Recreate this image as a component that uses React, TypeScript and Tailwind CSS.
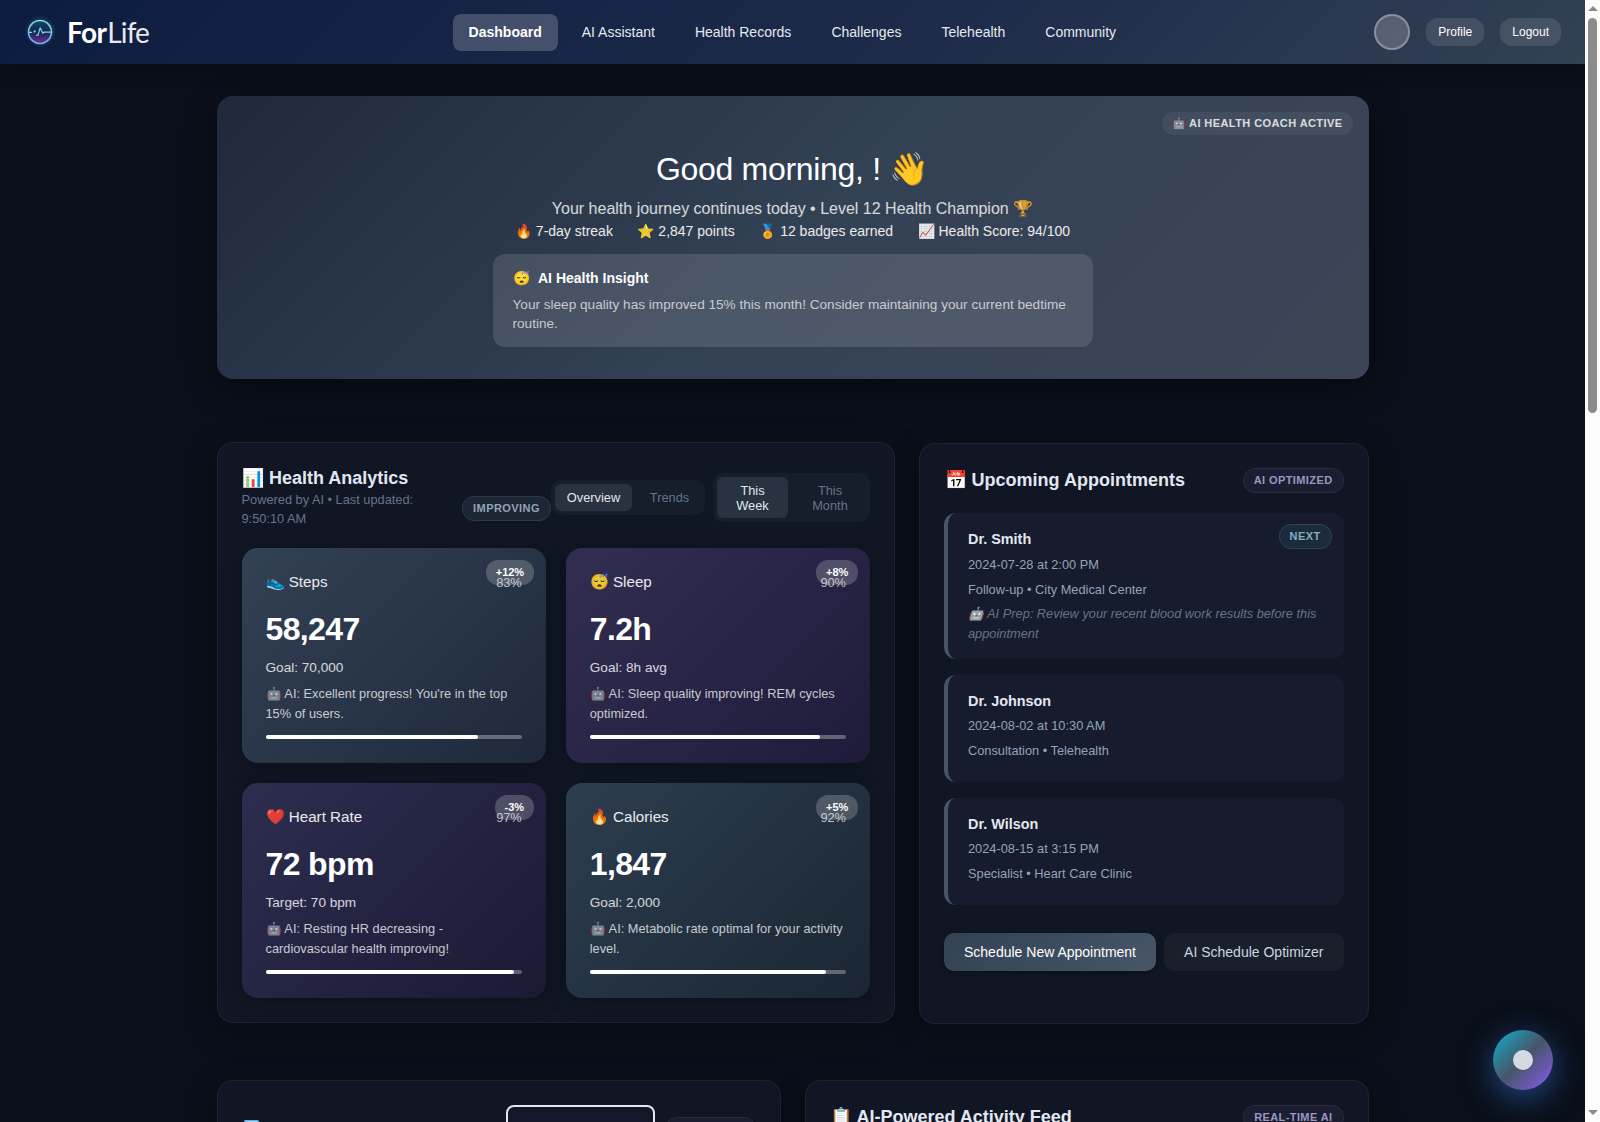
const nav = ["Dashboard", "AI Assistant", "Health Records", "Challenges", "Telehealth", "Community"];

const stats = ["🔥 7-day streak", "⭐ 2,847 points", "🏅 12 badges earned", "📈 Health Score: 94/100"];

const metrics = [
  { title: "👟 Steps", pct: 83, change: "+12%", value: "58,247", goal: "Goal: 70,000", tip: "🤖 AI: Excellent progress! You're in the top 15% of users.", bg: "from-[#334155] to-[#1e293b]" },
  { title: "😴 Sleep", pct: 90, change: "+8%", value: "7.2h", goal: "Goal: 8h avg", tip: "🤖 AI: Sleep quality improving! REM cycles optimized.", bg: "from-[#312e51] to-[#1e1b3a]" },
  { title: "❤️ Heart Rate", pct: 97, change: "-3%", value: "72 bpm", goal: "Target: 70 bpm", tip: "🤖 AI: Resting HR decreasing - cardiovascular health improving!", bg: "from-[#2d2d4f] to-[#1a1a35]" },
  { title: "🔥 Calories", pct: 92, change: "+5%", value: "1,847", goal: "Goal: 2,000", tip: "🤖 AI: Metabolic rate optimal for your activity level.", bg: "from-[#2d3e50] to-[#1a2633]" },
];

const appointments = [
  { name: "Dr. Smith", date: "2024-07-28 at 2:00 PM", place: "Follow-up • City Medical Center", prep: "🤖 AI Prep: Review your recent blood work results before this appointment", height: "h-[145.6px]" },
  { name: "Dr. Johnson", date: "2024-08-02 at 10:30 AM", place: "Consultation • Telehealth", height: "h-[107.2px]" },
  { name: "Dr. Wilson", date: "2024-08-15 at 3:15 PM", place: "Specialist • Heart Care Clinic", height: "h-[106.8px]" },
];

const card = "rounded-2xl border border-white/[0.06] bg-[#101624] p-6 shadow-[0_8px_32px_rgba(0,0,0,0.3)]";
const purpleBadge = "rounded-xl border border-[#2b2b43] bg-[#1b1d30] px-2.5 py-1 text-[11px] leading-[15px] font-semibold tracking-[0.4px] text-[#9a97c0]";

function Logo() {
  return (
    <div className="flex items-center">
      <svg width="32" height="32" viewBox="0 0 32 32" fill="none" className="mr-[11px]">
        <defs>
          <linearGradient id="ring" x1="0" y1="0" x2="0" y2="1">
            <stop offset="0" stopColor="#8fdce8" />
            <stop offset="1" stopColor="#77a5e6" />
          </linearGradient>
          <linearGradient id="fill" x1="0" y1="0" x2="0" y2="1">
            <stop offset="0" stopColor="#0b4a63" />
            <stop offset="0.5" stopColor="#13284f" />
            <stop offset="1" stopColor="#6b2f9c" />
          </linearGradient>
          <linearGradient id="halo" x1="1" y1="0" x2="0" y2="1">
            <stop offset="0" stopColor="#0f3a52" />
            <stop offset="1" stopColor="#14204a" />
          </linearGradient>
        </defs>
        <circle cx="16" cy="15.5" r="15" fill="url(#halo)" opacity="0.8" />
        <circle cx="16" cy="16" r="11.5" fill="url(#fill)" stroke="url(#ring)" strokeWidth="1.6" />
        <path d="M5 16.3h2.8M12.6 19.3l1.4-.2 2.1-7.3 2.7 5.5 1.6-1.2H27" stroke="#8fd0ee" strokeWidth="1.2" strokeLinecap="round" strokeLinejoin="round" />
        <circle cx="10.6" cy="15.4" r="1.1" fill="#8fd0ee" />
      </svg>
      <div className="flex items-baseline font-[Lato,sans-serif] text-[28px] leading-8 text-white">
        <span className="font-bold tracking-[-0.6px]">For</span>
        <span className="ml-px tracking-[-0.9px] text-white/90">Life</span>
      </div>
    </div>
  );
}

function Header() {
  return (
    <header className="relative z-10 flex h-16 shrink-0 items-center justify-between bg-[linear-gradient(135deg,#0c1c40_0%,#1e2b4a_60%,#334155_100%)] px-6 shadow-[0_4px_20px_rgba(0,0,0,0.2)]">
      <Logo />
      <nav className="absolute left-[452.6px] flex gap-2">
        {nav.map((n, i) => (
          <a key={n} className={i === 0 ? "rounded-lg bg-white/20 px-4 py-2 text-sm leading-[21px] font-semibold text-white" : "px-4 py-2 text-sm leading-[21px] text-[#e6e9ef]"}>
            {n}
          </a>
        ))}
      </nav>
      <div className="flex items-center gap-4">
        <div className="size-9 rounded-full border-2 border-white/30 bg-white/20" />
        <button className="h-7 rounded-xl bg-white/10 px-3 text-xs text-white">Profile</button>
        <button className="h-7 rounded-xl bg-white/10 px-3 text-xs text-white">Logout</button>
      </div>
    </header>
  );
}

function Hero() {
  return (
    <section className="relative flex h-[283px] flex-col items-center rounded-2xl bg-[linear-gradient(135deg,#1e293b_0%,#334155_50%,#3c4556_100%)] pt-12 shadow-[0_8px_32px_rgba(0,0,0,0.4)]">
      <span className="absolute top-4 right-4 rounded-xl bg-white/[0.06] px-2.5 py-1 text-[11px] leading-[15px] font-semibold tracking-[0.42px] text-white/80">🤖 AI HEALTH COACH ACTIVE</span>
      <h1 className="text-[32px] leading-[51px] font-light tracking-[-0.32px] text-white">Good morning, ! 👋</h1>
      <p className="mt-px text-base leading-[26px] text-white/80">Your health journey continues today • Level 12 Health Champion 🏆</p>
      <div className="-mt-[2px] flex gap-[24.6px] text-sm leading-[22px] text-white/90">
        {stats.map((s) => <span key={s}>{s}</span>)}
      </div>
      <div className="mt-3 h-[93px] w-[600px] rounded-xl bg-white/[0.12] px-5 pt-3">
        <div className="flex gap-[8.5px] text-sm leading-[24px] text-white">
          <span>😴</span>
          <span className="font-semibold">AI Health Insight</span>
        </div>
        <p className="mt-[5px] text-[13.6px] leading-[19px] text-white/70">Your sleep quality has improved 15% this month! Consider maintaining your current bedtime routine.</p>
      </div>
    </section>
  );
}

function Metric({ m }: { m: (typeof metrics)[number] }) {
  return (
    <div className={`relative h-[215px] rounded-2xl bg-linear-135 p-6 shadow-[0_4px_20px_rgba(0,0,0,0.25)] ${m.bg}`}>
      <span className="absolute top-3 right-3 h-[25px] rounded-xl bg-white/20 px-[9.6px] text-[11px] leading-[25px] font-semibold text-white">{m.change}</span>
      <div className="relative flex h-5 items-center justify-between">
        <span className="text-[15.2px] text-white/90">{m.title}</span>
        <span className="pt-px text-[12.8px] text-white/70">{m.pct}%</span>
      </div>
      <div className="mt-4 text-[32px] leading-[42px] font-bold tracking-[-0.64px] text-white">{m.value}</div>
      <div className="mt-2 text-[13.6px] leading-[20px] text-white/80">{m.goal}</div>
      <p className="mt-[6px] text-[12.8px] leading-[20px] text-white/75">{m.tip}</p>
      <div className="mt-[11px] h-1 rounded-full bg-white/30">
        <div className="h-1 rounded-full bg-white" style={{ width: `${m.pct}%` }} />
      </div>
    </div>
  );
}

function Analytics() {
  return (
    <section className={`${card} mb-px h-[581px] w-[678.5px] -translate-y-px`}>
      <div className="flex h-[81px] items-start">
        <div className="w-[220.5px] pr-7">
          <h2 className="pl-[0.4px] text-lg leading-[23px] font-semibold text-[#e2e8f0]">📊 Health Analytics</h2>
          <p className="text-[12.8px] leading-[19px] text-[#64748b]">Powered by AI • Last updated: 9:50:10 AM</p>
        </div>
        <span className="mt-[29px] h-[25px] w-[89px] rounded-xl border border-[#2e3b4c] bg-[#1c2635] text-center text-[11px] leading-[23px] font-semibold tracking-[0.44px] text-[#94a3b8]">IMPROVING</span>
        <div className="mt-[13px] flex h-[35px] w-[154px] rounded-[10px] bg-[#161d2b] p-1 text-[12.8px]">
          <button className="w-[77px] rounded-md bg-[#283241] text-[#e2e8f0]">Overview</button>
          <button className="ml-1.5 flex-1 text-[#64748b]">Trends</button>
        </div>
        <div className="mt-[6px] ml-2 flex h-[49px] w-[157px] rounded-[10px] bg-[#161d2b] p-1 text-[12.8px] leading-[15px]">
          <button className="w-[71px] rounded-md bg-[#283241] px-4 text-[#e2e8f0]">This Week</button>
          <button className="ml-[6px] flex-1 px-4 text-[#64748b]">This Month</button>
        </div>
      </div>
      <div className="grid grid-cols-2 gap-5">
        {metrics.map((m) => <Metric key={m.title} m={m} />)}
      </div>
    </section>
  );
}

function Appointments() {
  return (
    <section className={`${card} h-[581px] w-[449.5px]`}>
      <div className="flex h-[25px] items-center justify-between">
        <h2 className="pb-px pl-[0.6px] text-lg leading-6 font-semibold text-[#e2e8f0]">📅 Upcoming Appointments</h2>
        <span className={purpleBadge}>AI OPTIMIZED</span>
      </div>
      <div className="mt-[20.4px] flex flex-col gap-4">
        {appointments.map((a) => (
          <div key={a.name} className={`relative rounded-xl border-l-4 border-[#475569] bg-[#161b2d] px-5 pt-4 text-[12.8px] leading-[20px] text-[#94a3b8] ${a.height}`}>
            {a.prep && <span className="absolute top-[11px] right-3 h-[25px] rounded-xl border border-[#2a4453] bg-[#1c2b3c] px-2.5 text-[11px] leading-[23px] font-semibold tracking-[0.4px] text-[#7fb0c0]">NEXT</span>}
            <h3 className="text-[14.4px] leading-[20px] font-semibold text-[#e2e8f0]">{a.name}</h3>
            <p className="mt-[5.3px]">{a.date}</p>
            <p className="mt-[4.9px]">{a.place}</p>
            {a.prep && <p className="mt-[4px] text-[#64748b] italic">{a.prep}</p>}
          </div>
        ))}
      </div>
      <div className="mt-7 flex gap-2 text-sm">
        <button className="h-[38px] w-[212px] rounded-[10px] bg-linear-135 from-[#334155] to-[#475569] pt-px text-white shadow-[0_2px_8px_rgba(0,0,0,0.3)]">Schedule New Appointment</button>
        <button className="h-[38px] flex-1 rounded-[10px] bg-[#1a202b] pt-px text-[#cbd5e1]">AI Schedule Optimizer</button>
      </div>
    </section>
  );
}

// Native looking scrollbar on the right edge
function Scrollbar() {
  return (
    <div className="flex w-[15px] shrink-0 flex-col items-center bg-[#fcfcfc]">
      <div className="mt-[6px] border-x-[5px] border-b-[5px] border-x-transparent border-b-[#8b8b8b]" />
      <div className="mt-[7px] h-[395px] w-[9px] rounded-full bg-[#8b8b8b]" />
      <div className="mt-auto mb-[7px] border-x-[5px] border-t-[5px] border-x-transparent border-t-[#8b8b8b]" />
    </div>
  );
}

export default function App() {
  return (
    <div className="flex h-[1122px] w-[1600px] overflow-hidden bg-[#0a0f19] font-['Liberation_Sans',sans-serif]">
      <div className="relative flex min-w-0 flex-1 flex-col overflow-hidden">
        <Header />
        <main className="mx-auto w-[1152px] pt-8">
          <Hero />
          <div className="mt-16 flex gap-6">
            <Analytics />
            <Appointments />
          </div>
          <div className="mt-[55px] grid grid-cols-2 gap-6">
            <section className={`${card} flex h-[300px] items-start justify-between`}>
              <svg width="20" height="22" viewBox="0 0 20 22" className="mt-[15px] ml-0.5">
                <path d="M1 .7h12.5L18 5.200V21H1z" fill="#e6f3fa" stroke="#5cb3e4" strokeWidth="1.400" />
              </svg>
              <div className="flex items-start gap-2.5">
                <div className="h-16 w-[149px] rounded-lg border-2 border-[#e2e8f0] bg-[#12182a]" />
                <span className={`${purpleBadge} mt-[12px] h-[25px] w-[91px]`} />
              </div>
            </section>
            <section className={`${card} h-[300px]`}>
              <div className="flex h-[25px] items-center justify-between">
                <h2 className="pb-px pl-[0.6px] text-lg leading-6 font-semibold text-[#e2e8f0]">📋 AI-Powered Activity Feed</h2>
                <span className={purpleBadge}>REAL-TIME AI</span>
              </div>
            </section>
          </div>
        </main>
        {/* Assistant button */}
        <button className="absolute right-8 bottom-8 flex size-[60px] items-center justify-center rounded-full bg-[linear-gradient(135deg,#10b0cc_0%,#475569_50%,#8b5cf6_100%)] shadow-[0_8px_32px_rgba(59,130,246,0.5)]">
          <span className="size-5 rounded-full bg-[#d5d9e2]" />
        </button>
      </div>
      <Scrollbar />
    </div>
  );
}
